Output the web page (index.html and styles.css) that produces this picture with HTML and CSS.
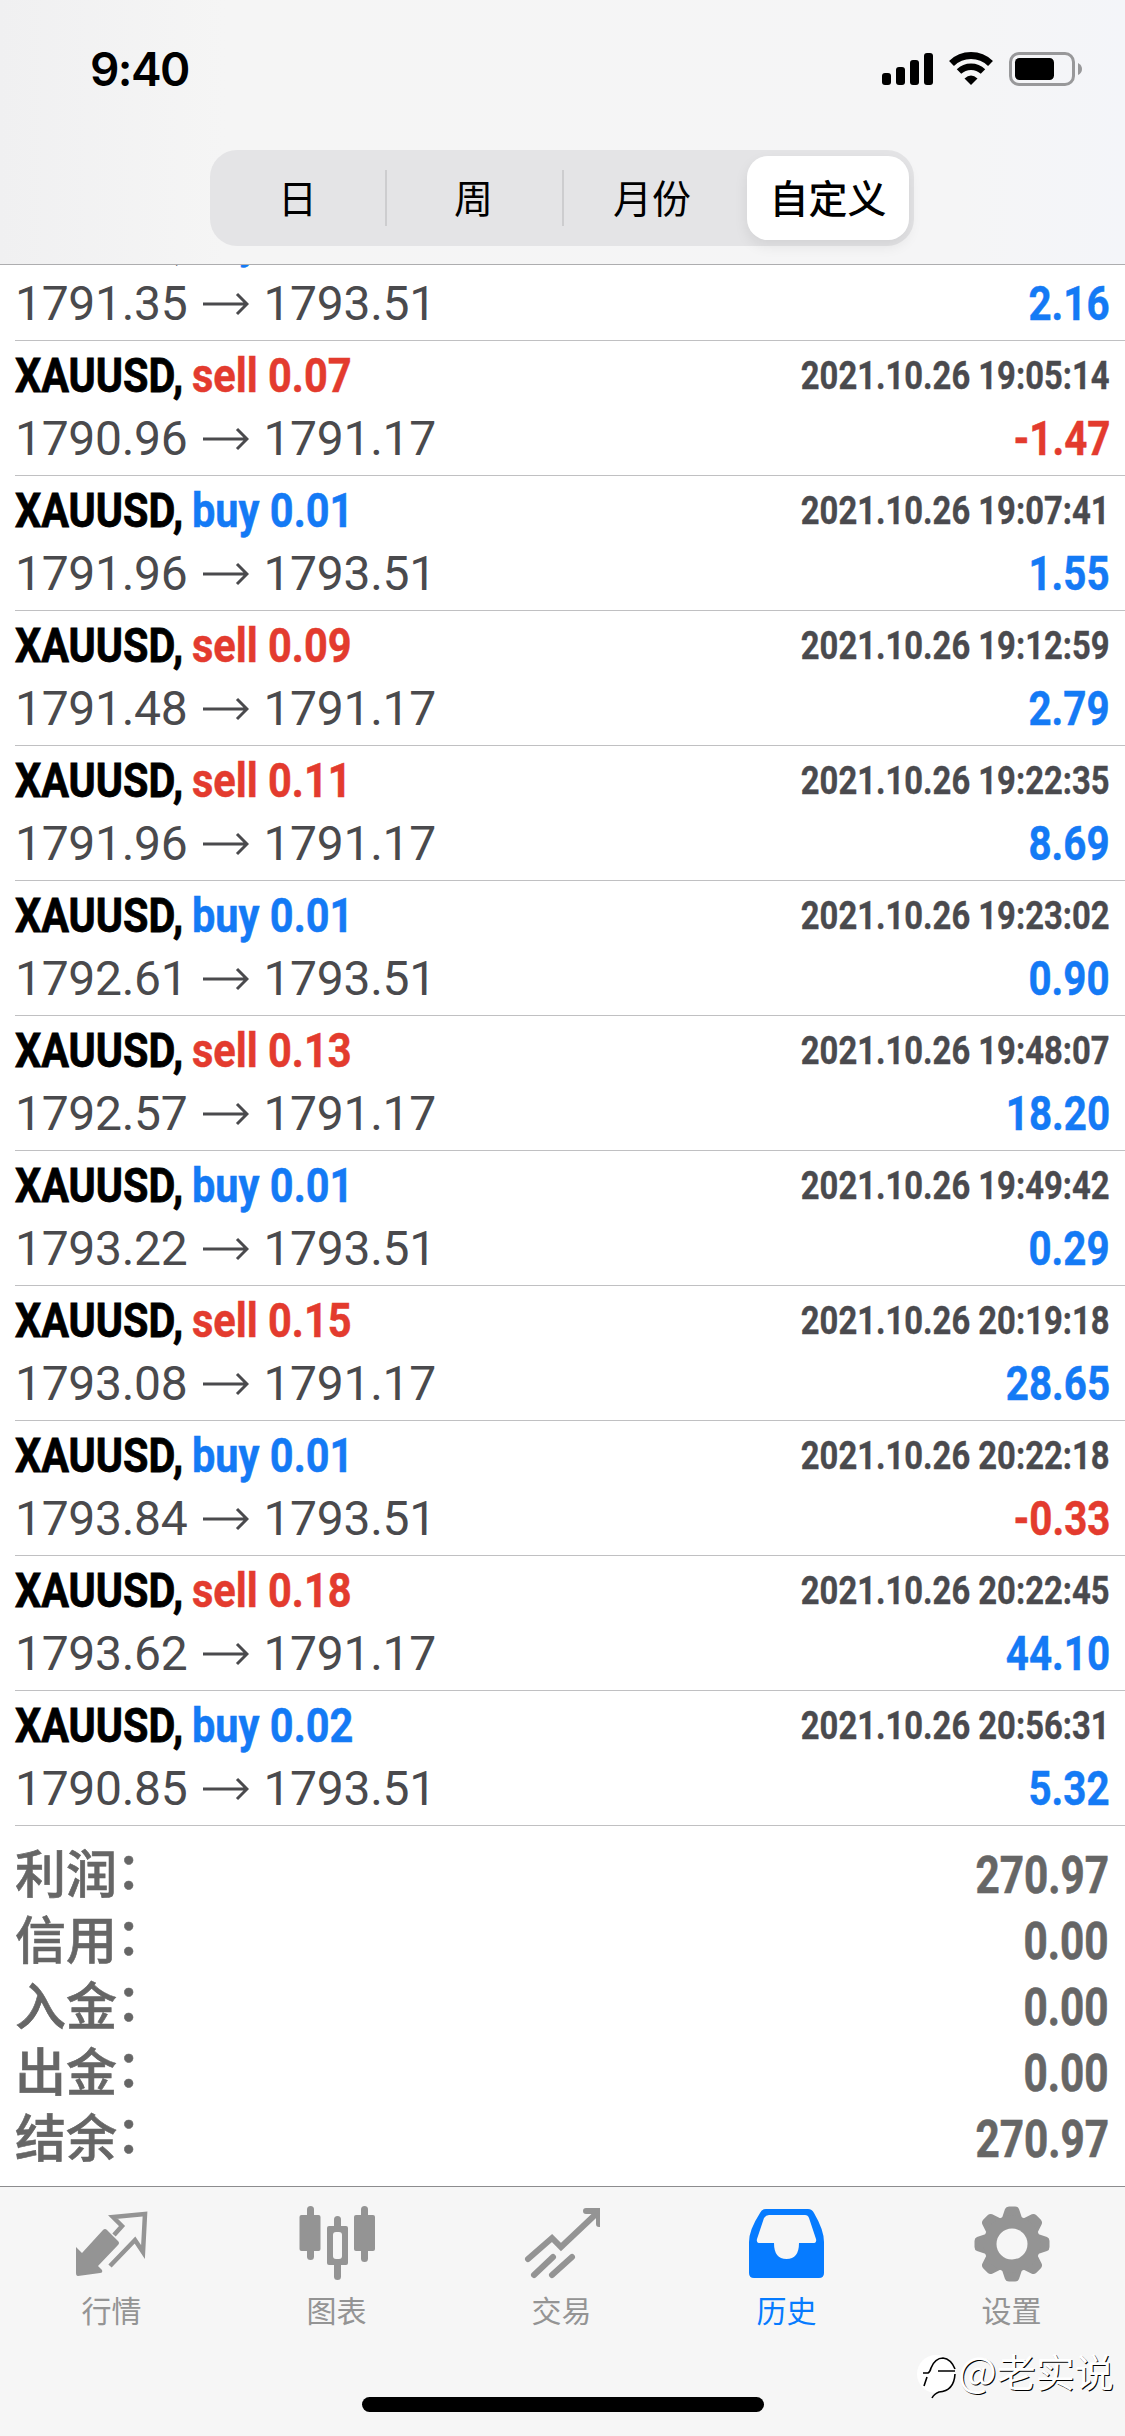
FILE: index.html
```html
<!DOCTYPE html>
<html lang="zh-CN">
<head>
<meta charset="utf-8">
<title>历史</title>
<link rel="stylesheet" href="styles.css">
</head>
<body>
<div class="app">
  <header class="header">
    <div class="status">
      <span class="clock">9:40</span>
      <svg class="status-icons" width="200" height="34" viewBox="0 0 200 34">
        <rect x="0" y="21" width="9" height="12" rx="3"/><rect x="14" y="15" width="9" height="18" rx="3"/><rect x="28" y="8" width="9" height="25" rx="3"/><rect x="42" y="1" width="9" height="32" rx="3"/>
        <g fill="none" stroke="#000"><path d="M69.500 11.500A28 28 0 0 1 108.500 11.500" stroke-width="7"/><path d="M77 19.500A17.500 17.500 0 0 1 101 19.500" stroke-width="6.500"/></g>
        <path d="M89 33L82.500 26.500Q89 20.500 95.500 26.500Z"/>
        <rect x="128.500" y="1.500" width="63" height="31" rx="8.500" fill="none" stroke="#98989a" stroke-width="3"/>
        <rect x="133" y="6" width="39" height="22" rx="4.500"/><path d="M196 11Q200 13 200 17T196 23Z" fill="#98989a"/>
      </svg>
    </div>
    <nav class="segments">
      <span class="seg">日</span><span class="seg divided">周</span><span class="seg divided">月份</span><span class="seg active">自定义</span>
    </nav>
  </header>
  <main class="list" id="list"></main>
  <section class="summary">
    <div class="sum"><span>利润<i class="colon">：</i></span><b class="total">270.97</b></div>
    <div class="sum"><span>信用<i class="colon">：</i></span><b class="total">0.00</b></div>
    <div class="sum"><span>入金<i class="colon">：</i></span><b class="total">0.00</b></div>
    <div class="sum"><span>出金<i class="colon">：</i></span><b class="total">0.00</b></div>
    <div class="sum"><span>结余<i class="colon">：</i></span><b class="total">270.97</b></div>
  </section>
  <footer class="tabbar">
    <div class="tab"><svg width="76" height="76" viewBox="0 0 76 76"><path d="M2 41L8 47L29 24Q31 22 33 24L44 35Q46 37 44 39L24 60L28 64Q29 67 26 67L4 70Q2 70 2 67Z"/><path d="M40 29L48 20L39 11L71 8L69 46L61 34L36 60" fill="none" stroke="currentColor" stroke-width="4.500"/></svg><span>行情</span></div>
    <div class="tab"><svg width="76" height="76" viewBox="0 0 76 76"><rect x="8" y="0" width="7" height="54" rx="3.500"/><rect x="0.500" y="9" width="21" height="36" rx="2"/><rect x="62" y="0" width="7" height="56" rx="3.500"/><rect x="55" y="9" width="21" height="36" rx="2"/><rect x="35" y="10" width="7" height="64" rx="3.500"/><rect x="28" y="20" width="21" height="39" rx="2"/><rect class="hollow" x="34" y="26" width="9" height="27" rx="3"/></svg><span>图表</span></div>
    <div class="tab"><svg width="76" height="76" viewBox="0 0 76 76" fill="none" stroke="currentColor" stroke-width="6"><path d="M4 53L28 32L37 41L73 7M62 5H75V18" stroke-linecap="round"/><path d="M10 69L29 51M28 69L48 51" stroke-linecap="round"/></svg><span>交易</span></div>
    <div class="tab current"><svg width="76" height="76" viewBox="0 0 76 76"><path fill-rule="evenodd" d="M17 3H59Q63 3 65 7Q75 24 75 36V67Q75 72 70 72H5Q0 72 0 67V36Q0 24 11 7Q13 3 17 3ZM20 9Q17 9 15 12L8 33Q7 37 11 37H25Q25 53 37.500 53T50 37H64Q68 37 67 33L60 12Q59 9 56 9Z"/></svg><span>历史</span></div>
    <div class="tab"><svg width="76" height="76" viewBox="-38 -38 76 76"><g id="teeth"><path d="M-10-26L-7-35Q-6-37.500-3-37.500H3Q6-37.500 7-35L10-26V26L7 35Q6 37.500 3 37.500H-3Q-6 37.500-7 35L-10 26Z"/></g><use href="#teeth" transform="rotate(45)"/><use href="#teeth" transform="rotate(90)"/><use href="#teeth" transform="rotate(135)"/><circle r="28.500"/><circle class="hollow" r="15.500"/></svg><span>设置</span></div>
    <div class="home"></div>
    <div class="watermark"><svg width="42" height="46" viewBox="0 0 42 46"><circle cx="20" cy="19" r="19" fill="#fff"/><path d="M7 18H12Q14 17 15 13Q19 3 27 3Q35 4 39 14M22 16H39M39 19Q38 36 23 37Q18 39 16 43M11 22L8 31" fill="none" stroke="#000" stroke-width="1.600"/></svg><span class="author"><span class="at">@</span>老实说</span></div>
  </footer>
</div>
<script src="app.js"></script>
</body>
</html>
```
FILE: styles.css
```css
* { box-sizing: border-box; }
body { margin: 0; background: #fff; font-family: Roboto, "Noto Sans CJK SC", sans-serif; }
.app { width: 1125px; height: 2436px; overflow: hidden; display: flex; flex-direction: column; }
.header { height: 265px; flex: none; background: linear-gradient(90deg, #f0f0f1, #f5f5f5 20%, #f5f5f6 85%, #f4f5f9); border-bottom: 1px solid #adadaf; padding-top: 52px; }
.status { display: flex; justify-content: space-between; align-items: center; height: 34px; padding: 0 43px 0 90px; }
.clock { font: 600 46px/34px Inter, sans-serif; letter-spacing: -1.6px; }
.status-icons { display: block; }
.segments { margin: 64px 0 0 210px; width: 704px; height: 96px; border-radius: 27px; background: #e4e4e6; display: grid; grid-template-columns: 175px 177px 180px 162px; padding: 6px 5px 6px 0; }
.seg { font: 400 39px/81px "Noto Sans CJK SC", sans-serif; text-align: center; height: 84px; }
.divided { background: linear-gradient(#cdcdcf, #cdcdcf) 0 14px / 2px 56px no-repeat; }
.active { transform: translateX(5px); font-weight: 500; background: #fff; border-radius: 21px; box-shadow: 0 6px 14px rgba(0,0,0,.08); }
.list { height: 1561px; flex: none; display: flex; flex-direction: column; justify-content: flex-end; overflow: hidden; }
.row { height: 135px; flex: none; margin-left: 15px; padding: 4px 15px 0 0; border-bottom: 1px solid #c0c0c2; }
.line { display: flex; justify-content: space-between; height: 63px; line-height: 62px; white-space: nowrap; }
.deal { display: flex; font-size: 48px; font-weight: 700; }
.symbol { width: 177px; transform: scaleX(.86); transform-origin: left; -webkit-text-stroke: .8px; }
.side { transform: scaleX(.865); transform-origin: left; -webkit-text-stroke: .5px; }
.buy, .plus { color: #147af5; }
.sell, .minus { color: #e33b2e; }
.date { font-size: 39px; font-weight: 700; color: #4a4a4e; transform: scaleX(.84); transform-origin: right; -webkit-text-stroke: .4px; }
.prices { font-size: 48px; color: #4a4a4d; display: flex; letter-spacing: -.3px; }
.arrow { margin: 0 14px 0 16px; width: 46px; }
.amount { font-size: 48px; font-weight: 700; transform: scaleX(.84); transform-origin: right; -webkit-text-stroke: .5px; }
.summary { height: 360px; flex: none; padding: 17px 16px 0 15px; color: #666; }
.sum { display: flex; justify-content: space-between; height: 66px; line-height: 66px; font-size: 51px; font-weight: 500; -webkit-text-stroke: .6px; }
.colon { font-style: normal; line-height: 0; vertical-align: 4px; margin-left: -1px; }
.total { font-weight: 700; transform: scaleX(.83); transform-origin: right; }
.tabbar { height: 250px; position: relative; background: #f6f6f6; border-top: 1px solid #8c8c8e; display: grid; grid-template-columns: repeat(5, 225px); padding-top: 19px; color: #949494; }
.tab { display: flex; flex-direction: column; align-items: center; padding-right: 2px; font: 400 30px/44px "Noto Sans CJK SC", sans-serif; gap: 5px; }
.tab svg { fill: currentColor; display: block; }
.tab svg[fill="none"] { fill: none; }
.tab .hollow { fill: #f6f6f6; }
.current { color: #067bff; }
.home { position: absolute; left: 362px; top: 210px; width: 402px; height: 15px; border-radius: 8px; background: #000; }
.watermark { position: absolute; left: 916px; top: 168px; display: flex; color: #fff; font: 400 39px/28px "Noto Sans CJK SC", sans-serif; text-shadow: 1px 1px 0 #000; white-space: nowrap; }
.author { height: 46px; }
.at { font-size: 41px; }
```
FILE: app.js
```js
const deals = [
  ['buy', '0.01', '', '1791.35', '1793.51', '2.16'],
  ['sell', '0.07', '2021.10.26 19:05:14', '1790.96', '1791.17', '-1.47'],
  ['buy', '0.01', '2021.10.26 19:07:41', '1791.96', '1793.51', '1.55'],
  ['sell', '0.09', '2021.10.26 19:12:59', '1791.48', '1791.17', '2.79'],
  ['sell', '0.11', '2021.10.26 19:22:35', '1791.96', '1791.17', '8.69'],
  ['buy', '0.01', '2021.10.26 19:23:02', '1792.61', '1793.51', '0.90'],
  ['sell', '0.13', '2021.10.26 19:48:07', '1792.57', '1791.17', '18.20'],
  ['buy', '0.01', '2021.10.26 19:49:42', '1793.22', '1793.51', '0.29'],
  ['sell', '0.15', '2021.10.26 20:19:18', '1793.08', '1791.17', '28.65'],
  ['buy', '0.01', '2021.10.26 20:22:18', '1793.84', '1793.51', '-0.33'],
  ['sell', '0.18', '2021.10.26 20:22:45', '1793.62', '1791.17', '44.10'],
  ['buy', '0.02', '2021.10.26 20:56:31', '1790.85', '1793.51', '5.32'],
];
document.getElementById('list').innerHTML = deals.map(([side, lot, date, open, close, profit]) => `
<article class="row">
  <div class="line"><div class="deal"><span class="symbol">XAUUSD,</span><span class="side ${side}">${side} ${lot}</span></div><time class="date">${date}</time></div>
  <div class="line"><div class="prices"><span>${open}</span><svg class="arrow" height="62" viewBox="0 0 46 62" fill="none" stroke="currentColor" stroke-width="3"><path d="M0 31H44M34 21L44 31L34 41"/></svg><span>${close}</span></div><span class="amount ${profit < 0 ? 'minus' : 'plus'}">${profit}</span></div>
</article>`).join('');
```
